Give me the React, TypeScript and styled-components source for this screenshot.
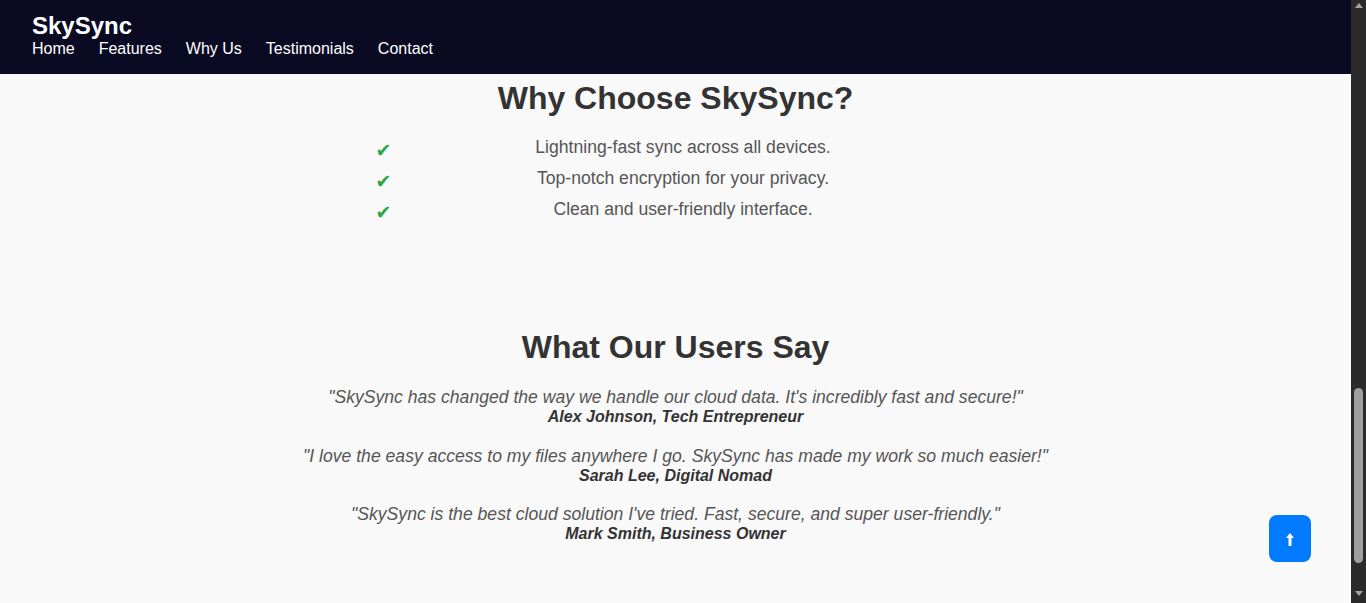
import React from "react";
import styled, { createGlobalStyle } from "styled-components";

const GlobalStyle = createGlobalStyle`
  body {
    margin: 0;
    background: #f9f9f9;
    color: #333;
    font-family: "Liberation Sans", Arial, sans-serif;
  }
  * { box-sizing: border-box; }
`;

const Viewport = styled.div`
  display: flex;
  height: 100vh;
  overflow: hidden;
`;

const Page = styled.div`
  position: relative;
  flex: 1;
  min-width: 0;
  display: flex;
  flex-direction: column;
`;

const Header = styled.header`
  height: 74px;
  padding: 12px 32px 0;
  background: #0a0a23;
  color: #fff;
`;

const Logo = styled.h1`
  margin: 0;
  font-size: 24px;
  font-weight: bold;
  line-height: 27.6px;
`;

const NavList = styled.ul`
  display: flex;
  gap: 24px;
  margin: 0;
  padding: 0;
  list-style: none;
`;

const NavLink = styled.a`
  color: #fff;
  text-decoration: none;
  font-size: 16px;
  line-height: 18.4px;
`;

const Section = styled.section<{ $padTop: number; $padBottom: number }>`
  padding: ${(p) => p.$padTop}px 20px ${(p) => p.$padBottom}px;
  text-align: center;
`;

const Title = styled.h2<{ $gap: number }>`
  margin: 0 0 ${(p) => p.$gap}px;
  font-size: 32px;
  line-height: 36.8px;
  font-weight: bold;
  color: #333;
`;

const CheckList = styled.ul`
  width: 600px;
  margin: 0 auto;
  padding: 0;
  list-style: none;
`;

const CheckItem = styled.li`
  display: flex;
  align-items: flex-start;
  margin-bottom: 10px;
  font-size: 17.6px;
  line-height: 21px;
  color: #555;
  &:last-child {
    margin-bottom: 0;
  }
`;

const Check = styled.span`
  position: relative;
  top: 3px;
  width: 15px;
  height: 21px;
  text-align: left;
  font-family: "DejaVu Sans", sans-serif;
  font-size: 19px;
  line-height: 21px;
  color: #28a745;
`;

const ItemText = styled.span`
  flex: 1;
  text-align: center;
`;

const TestimonialList = styled.div`
  display: flex;
  flex-direction: column;
  gap: 19px;
`;

const Testimonial = styled.div``;

const Quote = styled.p`
  margin: 0;
  font-size: 17.6px;
  line-height: 21px;
  font-style: italic;
  color: #555;
`;

const Author = styled.span`
  display: block;
  font-size: 16px;
  line-height: 18.4px;
  font-weight: bold;
  font-style: italic;
  color: #333;
`;

const BackToTop = styled.button`
  position: absolute;
  right: 40px;
  bottom: 41px;
  width: 42px;
  height: 47px;
  padding: 2px 0 0;
  display: flex;
  align-items: center;
  justify-content: center;
  border: none;
  border-radius: 8px;
  background: #007bff;
  color: #fff;
  cursor: pointer;
`;

const ScrollRail = styled.div`
  width: 15px;
  display: flex;
  flex-direction: column;
  background: #2b2b2b;
`;

const RailArrow = styled.div<{ $dir: "up" | "down" }>`
  height: 15px;
  display: flex;
  justify-content: center;
  align-items: ${(p) => (p.$dir === "up" ? "flex-start" : "flex-end")};
  padding: ${(p) => (p.$dir === "up" ? "3px 0 0" : "0 0 7px")};
  &::before {
    content: "";
    width: 0;
    height: 0;
    border-left: 4.5px solid transparent;
    border-right: 4.5px solid transparent;
    ${(p) =>
      p.$dir === "up"
        ? "border-bottom: 5px solid #a3a3a3;"
        : "border-top: 5px solid #a3a3a3;"}
  }
`;

const RailTrack = styled.div`
  flex: 1;
  display: flex;
  flex-direction: column;
  justify-content: flex-end;
  align-items: center;
  padding-bottom: 25px;
`;

const RailThumb = styled.div`
  width: 9px;
  height: 175px;
  border-radius: 5px;
  background: #9f9f9f;
`;

const UpArrow = () => (
  <svg width="8" height="13" viewBox="0 0 8 13" aria-hidden="true">
    <path d="M4 0 L8 5 L5.5 5 L5.5 13 L2.5 13 L2.5 5 L0 5 Z" fill="currentColor" />
  </svg>
);

const reasons = [
  "Lightning-fast sync across all devices.",
  "Top-notch encryption for your privacy.",
  "Clean and user-friendly interface.",
];

const testimonials = [
  {
    quote: "\"SkySync has changed the way we handle our cloud data. It's incredibly fast and secure!\"",
    author: "Alex Johnson, Tech Entrepreneur",
  },
  {
    quote: "\"I love the easy access to my files anywhere I go. SkySync has made my work so much easier!\"",
    author: "Sarah Lee, Digital Nomad",
  },
  {
    quote: "\"SkySync is the best cloud solution I've tried. Fast, secure, and super user-friendly.\"",
    author: "Mark Smith, Business Owner",
  },
];

export default function App() {
  return (
    <>
      <GlobalStyle />
      <Viewport>
        <Page>
          <Header>
            <Logo>SkySync</Logo>
            <nav>
              <NavList>
                {["Home", "Features", "Why Us", "Testimonials", "Contact"].map((l) => (
                  <li key={l}>
                    <NavLink href={`#${l.toLowerCase().replace(" ", "")}`}>{l}</NavLink>
                  </li>
                ))}
              </NavList>
            </nav>
          </Header>

          <Section id="whyus" $padTop={6} $padBottom={50}>
            <Title $gap={20}>Why Choose SkySync?</Title>
            <CheckList>
              {reasons.map((r) => (
                <CheckItem key={r}>
                  <Check>✔</Check>
                  <ItemText>{r}</ItemText>
                </CheckItem>
              ))}
            </CheckList>
          </Section>

          <Section id="testimonials" $padTop={59} $padBottom={0}>
            <Title $gap={21.5}>What Our Users Say</Title>
            <TestimonialList>
              {testimonials.map((t) => (
                <Testimonial key={t.author}>
                  <Quote>{t.quote}</Quote>
                  <Author>{t.author}</Author>
                </Testimonial>
              ))}
            </TestimonialList>
          </Section>

          <BackToTop aria-label="Back to top">
            <UpArrow />
          </BackToTop>
        </Page>

        <ScrollRail aria-hidden="true">
          <RailArrow $dir="up" />
          <RailTrack>
            <RailThumb />
          </RailTrack>
          <RailArrow $dir="down" />
        </ScrollRail>
      </Viewport>
    </>
  );
}
